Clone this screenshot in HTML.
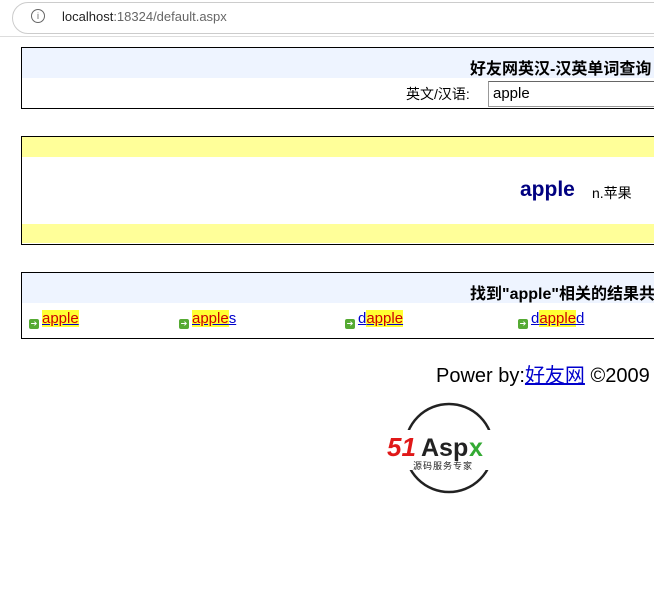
<!DOCTYPE html>
<html><head><meta charset="utf-8"><style>
body{margin:0;width:654px;height:602px;overflow:hidden;background:#fff;font-family:"Liberation Sans","Noto Sans CJK SC",sans-serif;position:relative}
.abs{position:absolute}
.bar{left:0;top:0;width:654px;height:36px;border-bottom:1px solid #ddd;background:#fff}
.url{left:12px;top:2px;width:700px;height:30px;border:1px solid #ccc;border-radius:16px;background:#fff}
.box{left:21px;width:700px;border:1px solid #000;background:#fff}
.hd{background:#eef4ff;height:30px}
.t{font-weight:bold;font-size:16px;white-space:nowrap}
a{color:#00c;text-decoration:underline}
.hl{background:#ffff33;color:#c00}
.ic{display:inline-block;width:10px;height:10px;background:#5a3;border-radius:2px;color:#fff;font-size:8px;line-height:10px;text-align:center;vertical-align:-3px;margin-right:3px}
</style></head><body>
<div class="abs bar"></div>
<div class="abs url"></div>
<div class="abs" style="left:31px;top:9px;width:12px;height:12px;border:1px solid #666;border-radius:50%;font-size:9px;line-height:12px;text-align:center;color:#666">i</div>
<div class="abs" style="left:62px;top:9px;font-size:13px;color:#222">localhost<span style="color:#666">:18324/default.aspx</span></div>

<div class="abs box" style="top:47px;height:60px">
 <div class="hd"></div>
</div>
<div class="abs t" style="left:470px;top:55px">好友网英汉-汉英单词查询</div>
<div class="abs" style="left:406px;top:84px;font-size:14px">英文/汉语:</div>
<div class="abs" style="left:488px;top:81px;width:200px;height:24px;border:1px solid #999;border-top-color:#666;font-size:15px;line-height:24px;padding-left:4px">apple</div>

<div class="abs box" style="top:136px;height:107px"></div>
<div class="abs" style="left:22px;top:137px;width:640px;height:20px;background:#ffff99"></div>
<div class="abs" style="left:22px;top:224px;width:640px;height:19px;background:#ffff99"></div>
<div class="abs" style="left:520px;top:178px;font-size:21px;font-weight:bold;color:#000080">apple</div>
<div class="abs" style="left:592px;top:183px;font-size:14px">n.苹果</div>

<div class="abs box" style="top:272px;height:65px"><div class="hd"></div></div>
<div class="abs t" style="left:470px;top:280px">找到"apple"相关的结果共</div>
<div class="abs" style="left:29px;top:310px;font-size:15px"><span class="ic">➔</span><a><span class="hl">apple</span></a></div>
<div class="abs" style="left:179px;top:310px;font-size:15px"><span class="ic">➔</span><a><span class="hl">apple</span>s</a></div>
<div class="abs" style="left:345px;top:310px;font-size:15px"><span class="ic">➔</span><a>d<span class="hl">apple</span></a></div>
<div class="abs" style="left:518px;top:310px;font-size:15px"><span class="ic">➔</span><a>d<span class="hl">apple</span>d</a></div>

<div class="abs" style="left:436px;top:359px;font-size:20px;white-space:nowrap">Power by:<a style="color:#00c">好友网</a> ©2009</div>

<svg class="abs" style="left:385px;top:400px" width="130" height="100">
<circle cx="64" cy="48" r="44" fill="none" stroke="#222" stroke-width="2.5"/>
<rect x="0" y="30" width="130" height="40" fill="#fff"/>
<text x="2" y="56" font-family="Liberation Sans" font-style="italic" font-weight="bold" font-size="26" fill="#e01818">51</text>
<text x="36" y="56" font-family="Liberation Sans" font-weight="bold" font-size="25" fill="#222">Asp</text>
<text x="84" y="56" font-family="Liberation Sans" font-weight="bold" font-size="25" fill="#3a3">x</text>
<text x="28" y="69" font-size="9" fill="#222" font-family="Noto Sans CJK SC,sans-serif" letter-spacing="1">源码服务专家</text>
</svg>
</body></html>
